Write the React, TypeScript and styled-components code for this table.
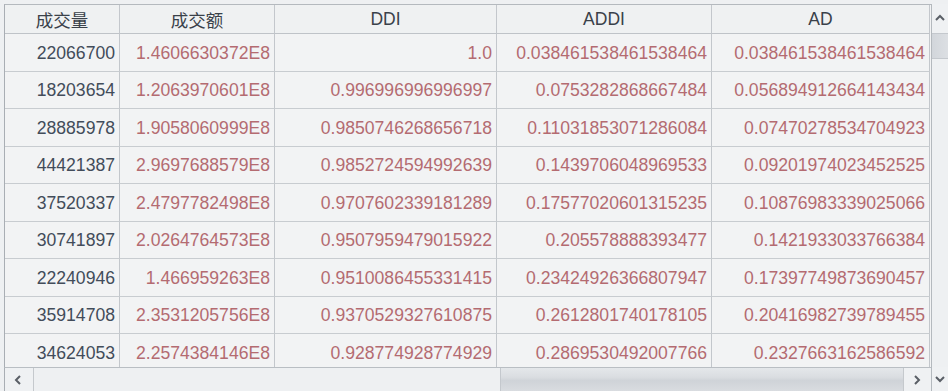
import React from 'react';
import styled, { createGlobalStyle } from 'styled-components';

const GlobalStyle = createGlobalStyle`
  html, body {
    margin: 0;
    padding: 0;
    background: #eef0f2;
  }
  body {
    font-family: "Liberation Sans", Arial, "Noto Sans CJK SC", sans-serif;
  }
`;

const COLS = [116, 155, 222, 215, 218];

const headers = ['成交量', '成交额', 'DDI', 'ADDI', 'AD'];

const rows: string[][] = [
  ['22066700', '1.4606630372E8', '1.0', '0.038461538461538464', '0.038461538461538464'],
  ['18203654', '1.2063970601E8', '0.996996996996997', '0.0753282868667484', '0.056894912664143434'],
  ['28885978', '1.9058060999E8', '0.9850746268656718', '0.11031853071286084', '0.07470278534704923'],
  ['44421387', '2.9697688579E8', '0.9852724594992639', '0.1439706048969533', '0.09201974023452525'],
  ['37520337', '2.4797782498E8', '0.9707602339181289', '0.17577020601315235', '0.10876983339025066'],
  ['30741897', '2.0264764573E8', '0.9507959479015922', '0.205578888393477', '0.1421933033766384'],
  ['22240946', '1.466959263E8', '0.9510086455331415', '0.23424926366807947', '0.17397749873690457'],
  ['35914708', '2.3531205756E8', '0.9370529327610875', '0.2612801740178105', '0.20416982739789455'],
  ['34624053', '2.2574384146E8', '0.928774928774929', '0.2869530492007766', '0.2327663162586592'],
];

const Page = styled.div`
  width: 948px;
  height: 391px;
  overflow: hidden;
  padding: 4px 0 0 4px;
  box-sizing: border-box;
  background: #eef0f2;
`;

const ScrollPane = styled.div`
  display: grid;
  grid-template-columns: 927px 17px;
  grid-template-rows: 363px 24px;
  grid-template-areas:
    'view vbar'
    'hbar vbar';
`;

const Viewport = styled.div`
  grid-area: view;
  overflow: hidden;
  border-left: 1px solid #a9aeb4;
  border-top: 1px solid #b4b9be;
  box-sizing: border-box;
  background: #f2f3f4;
`;

const Grid = styled.div`
  display: grid;
  grid-template-columns: ${COLS.map((c, i) => (i === 0 ? c - 1 : c) + 'px').join(' ')};
  grid-template-rows: 29px;
  grid-auto-rows: 37.5px;
`;

const HeadCell = styled.div`
  display: flex;
  align-items: center;
  justify-content: center;
  padding-top: 1px;
  border-right: 1px solid #c3c7cc;
  border-bottom: 1px solid #bfc3c8;
  background: #eff1f2;
  color: #3a414a;
  font-size: 17.5px;
  font-family: "Liberation Sans", Arial, "Noto Sans CJK SC", sans-serif;
`;

const Cell = styled.div<{ $first?: boolean }>`
  display: flex;
  align-items: center;
  justify-content: flex-end;
  padding: 2px 4px 0 0;
  border-right: 1px solid #c3c7cc;
  border-bottom: 1px solid #c8ccd0;
  background: #f2f3f4;
  color: ${(p) => (p.$first ? '#424c5a' : '#b46b71')};
  font-size: 17.6px;
  white-space: nowrap;
  overflow: hidden;
`;

const VBar = styled.div`
  grid-area: vbar;
  display: flex;
  flex-direction: column;
  border-left: 1px solid #b4b9be;
  background: #eef0f2;
`;

const HBar = styled.div`
  grid-area: hbar;
  display: flex;
  border-top: 1px solid #b9bec3;
  border-left: 1px solid #a9aeb4;
  background: #eef0f2;
`;

const ArrowBtn = styled.div<{ $w?: number; $h?: number }>`
  flex: 0 0 auto;
  width: ${(p) => (p.$w ? p.$w + 'px' : 'auto')};
  height: ${(p) => (p.$h ? p.$h + 'px' : 'auto')};
  display: flex;
  align-items: center;
  justify-content: center;
  background: #eff1f3;
`;

const HTrack = styled.div`
  flex: 1;
  display: flex;
  border-left: 1px solid #c5c9cd;
  border-right: 1px solid #c5c9cd;
`;

const HThumb = styled.div`
  margin-left: 466px;
  flex: 1;
  border-left: 1px solid #c4c8cd;
  background: linear-gradient(#e4e7ea 0%, #dadde1 40%, #cfd3d8 55%, #d9dce0 100%);
`;

const VThumb = styled.div`
  height: 24px;
  border-top: 1px solid #c4c8cd;
  border-bottom: 1px solid #c4c8cd;
  background: linear-gradient(90deg, #d2d6db, #dcdfe3);
`;

const VTrack = styled.div`
  flex: 1;
`;

const Chevron = ({ dir }: { dir: 'left' | 'right' | 'up' | 'down' }) => {
  const pts = {
    left: '7,2 3,6 7,10',
    right: '3,2 7,6 3,10',
    up: '2,7 6,3 10,7',
    down: '2,4 6,8 10,4',
  }[dir];
  return (
    <svg width="12" height="12" viewBox="0 0 12 12">
      <polyline points={pts} fill="none" stroke="#5a5f66" strokeWidth="2" />
    </svg>
  );
};

export default function App() {
  return (
    <Page>
      <GlobalStyle />
      <ScrollPane>
        <Viewport>
          <Grid>
            {headers.map((h) => (
              <HeadCell key={h}>{h}</HeadCell>
            ))}
            {rows.map((r, ri) =>
              r.map((v, ci) => (
                <Cell key={ri + '-' + ci} $first={ci === 0}>
                  {v}
                </Cell>
              ))
            )}
          </Grid>
        </Viewport>
        <HBar>
          <ArrowBtn $w={28}>
            <Chevron dir="left" />
          </ArrowBtn>
          <HTrack>
            <HThumb />
          </HTrack>
          <ArrowBtn $w={27}>
            <Chevron dir="right" />
          </ArrowBtn>
        </HBar>
        <VBar>
          <ArrowBtn $h={29}>
            <Chevron dir="up" />
          </ArrowBtn>
          <VThumb />
          <VTrack />
          <ArrowBtn $h={24}>
            <Chevron dir="down" />
          </ArrowBtn>
        </VBar>
      </ScrollPane>
    </Page>
  );
}
